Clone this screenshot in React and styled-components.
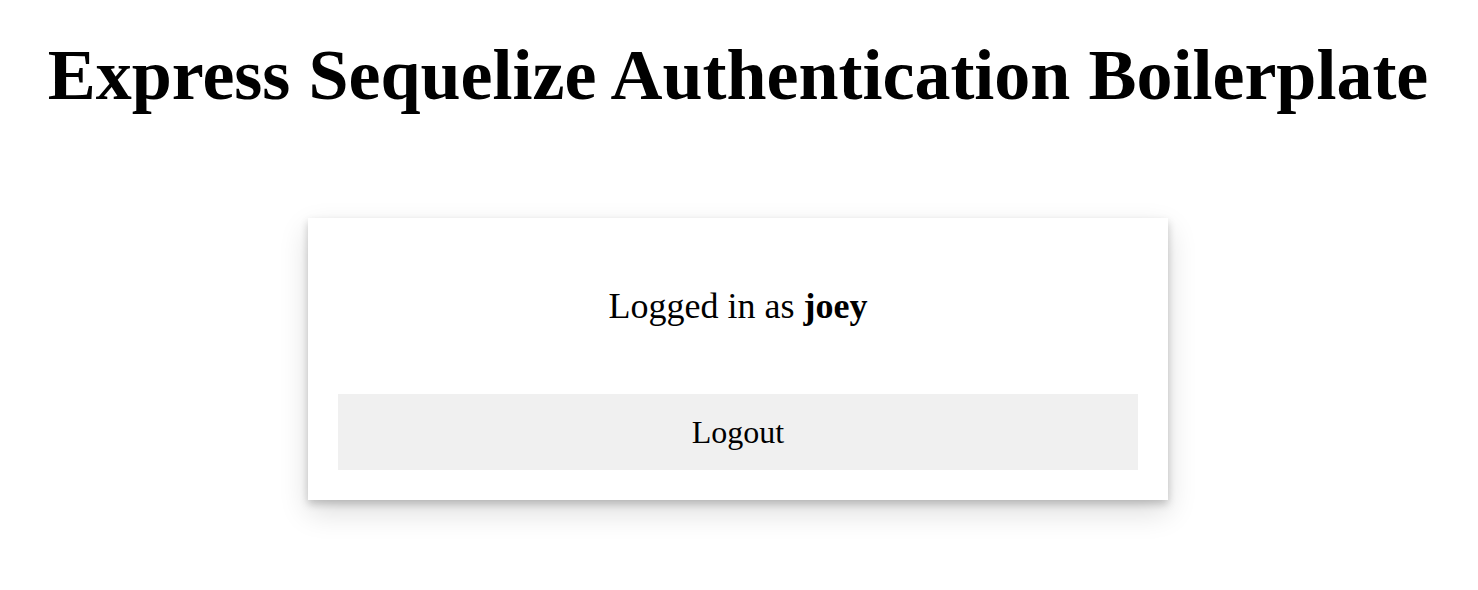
import React from "react";
import styled, { createGlobalStyle } from "styled-components";

const Global = createGlobalStyle`
  html, body { margin: 0; padding: 0; background: #fff; }
  body { font-family: "Liberation Serif", "Times New Roman", serif; color: #000; }
`;

const Page = styled.div`
  display: flex;
  flex-direction: column;
  align-items: center;
  padding: 33px 2px 0 0;
  min-height: 590px;
  box-sizing: border-box;
`;

const Title = styled.h1`
  margin: 0;
  font-size: 72px;
  line-height: 84px;
  font-weight: bold;
  text-align: center;
`;

const Card = styled.div`
  margin-top: 101px;
  width: 860px;
  box-sizing: border-box;
  padding: 60px 30px 30px;
  background: #fff;
  box-shadow: 0 12px 28px rgba(0, 0, 0, 0.14), 0 4px 8px rgba(0, 0, 0, 0.2);
  display: flex;
  flex-direction: column;
  align-items: stretch;
`;

const Status = styled.p`
  margin: 0 0 60px;
  font-size: 36px;
  line-height: 56px;
  text-align: center;
`;

const Button = styled.button`
  height: 76px;
  border: none;
  border-radius: 0;
  background: #f0f0f0;
  font-family: inherit;
  font-size: 32px;
  color: #000;
  cursor: pointer;
`;

export default function App() {
  return (
    <>
      <Global />
      <Page>
        <Title>Express Sequelize Authentication Boilerplate</Title>
        <Card>
          <Status>
            Logged in as <b>joey</b>
          </Status>
          <Button>Logout</Button>
        </Card>
      </Page>
    </>
  );
}
